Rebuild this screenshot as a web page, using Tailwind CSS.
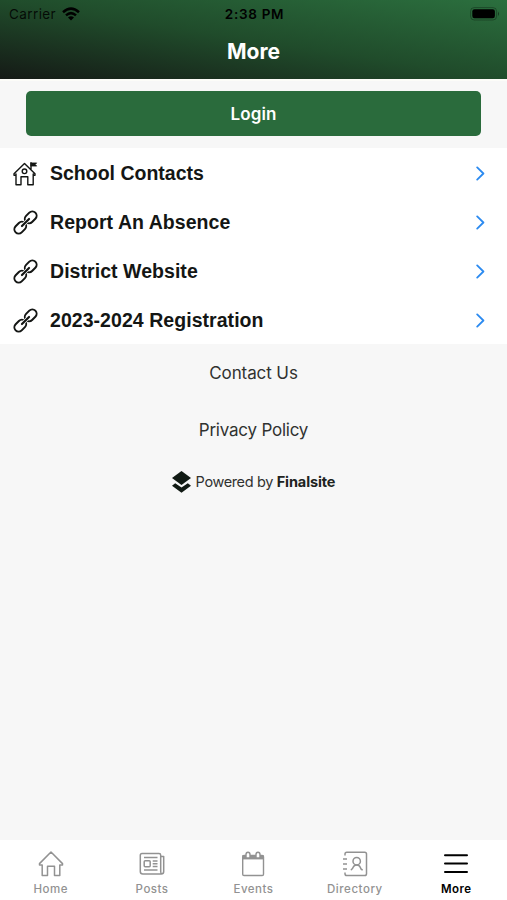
<!DOCTYPE html>
<html lang="en">
<head>
<meta charset="utf-8">
<title>More</title>
<script src="https://cdn.jsdelivr.net/npm/@tailwindcss/browser@4"></script>
</head>
<body class="bg-[#f7f7f7]">
<svg width="0" height="0" class="absolute" aria-hidden="true">
  <symbol id="link" viewBox="0 0 24 24" fill="none" stroke="currentColor" stroke-width="1.9" stroke-linecap="round">
    <rect x="-6.3" y="-4.1" width="12.6" height="8.2" rx="4.1" transform="translate(17 7) rotate(-45)"/>
    <rect x="-6.3" y="-4.1" width="12.6" height="8.2" rx="4.1" transform="translate(7 17) rotate(-45)"/>
    <path d="M8.6 15.4L15.4 8.6" stroke="#fff" stroke-width="3.6"/>
    <path d="M8.6 15.4L15.4 8.6" stroke-width="2.1"/>
  </symbol>
  <symbol id="chevron" viewBox="0 0 9 15" fill="none" stroke="#2b8af0" stroke-width="1.8" stroke-linecap="round" stroke-linejoin="round">
    <path d="M1.2 1.4L7.4 7.5L1.2 13.6"/>
  </symbol>
</svg>
<div class="flex h-[900px] w-[507px] flex-col overflow-hidden font-['Inter',sans-serif]">
  <header class="h-[79px] shrink-0 bg-[linear-gradient(to_top_right,#151a16,#204c2b_50%,#2b6f3e)]">
    <div class="grid h-7 grid-cols-3 items-center pl-[9px] pr-[7px] text-black">
      <div class="flex items-center gap-[6px]">
        <span class="pt-px text-[13.5px] leading-none tracking-[0.4px] text-black/85">Carrier</span>
        <svg class="h-[14px] w-[18px]" viewBox="0 0 18 14" fill="none" stroke="#000" stroke-width="2.5"><path d="M1 5.2Q9-2 17 5.2M4 8.4Q9 3.9 14 8.4"/><path d="M9 13.5L6 10.4Q9 8 12 10.4Z" fill="#000" stroke="none"/></svg>
      </div>
      <span class="pt-px text-center text-[13.5px] font-semibold leading-none tracking-[0.7px] whitespace-nowrap">2:38 PM</span>
      <svg class="h-[14px] w-[30px] justify-self-end" viewBox="0 0 30 14"><rect x="0.6" y="0.6" width="26" height="12.4" rx="3.6" fill="none" stroke="#000" stroke-opacity=".3"/><rect x="2.3" y="2.3" width="22.6" height="9" rx="2.2"/><path d="M28 4.5Q30 6.8 28 9Z" fill-opacity=".45"/></svg>
    </div>
    <h1 class="pt-[12px] text-center text-[21px] font-bold leading-6 text-white">More</h1>
  </header>
  <div class="h-[69px] shrink-0 border-t-2 border-[#fcfcf8] px-[26px] pt-[10px]">
    <button class="block h-[45px] w-full rounded-[5px] bg-[#2a6b3c] pt-[2px] text-[17px] font-semibold tracking-[0.1px] text-white">Login</button>
  </div>
  <ul class="h-[196px] shrink-0 bg-white font-['Liberation_Sans',sans-serif] text-[19.5px] font-bold text-[#141614]">
    <li class="flex h-[49px] items-center gap-[12px] pl-[13px] pr-[22px] pt-[2px]">
      <svg class="h-6 w-[25px]" viewBox="0 0 25 24" fill="none" stroke="currentColor" stroke-width="1.4" stroke-linejoin="round" stroke-linecap="round"><path d="M1 11.8L11.5 1.4L22 11.8M3 12V22.7H8V14.8H14.8V22.7H20.2V12M1 11.8V13.3H3M22 11.8V13.3H20.2M18 7.5V.8"/><path d="M18.1.9H23.7L22.2 2.5L23.7 4.1H18.1Z" fill="currentColor" stroke-width=".7"/><circle cx="11.5" cy="9.3" r="2.3"/></svg>
      <span class="flex-1">School Contacts</span>
      <svg class="h-[15px] w-[9px]"><use href="#chevron"/></svg>
    </li>
    <li class="flex h-[49px] items-center gap-[12px] pl-[13px] pr-[22px] pt-[2px]">
      <svg class="h-[25px] w-[25px]"><use href="#link"/></svg>
      <span class="flex-1 tracking-[0.05px]">Report An Absence</span>
      <svg class="h-[15px] w-[9px]"><use href="#chevron"/></svg>
    </li>
    <li class="flex h-[49px] items-center gap-[12px] pl-[13px] pr-[22px] pt-[2px]">
      <svg class="h-[25px] w-[25px]"><use href="#link"/></svg>
      <span class="flex-1 tracking-[0.05px]">District Website</span>
      <svg class="h-[15px] w-[9px]"><use href="#chevron"/></svg>
    </li>
    <li class="flex h-[49px] items-center gap-[12px] pl-[13px] pr-[22px] pt-[2px]">
      <svg class="h-[25px] w-[25px]"><use href="#link"/></svg>
      <span class="flex-1 tracking-[0.05px]">2023-2024 Registration</span>
      <svg class="h-[15px] w-[9px]"><use href="#chevron"/></svg>
    </li>
  </ul>
  <main class="flex flex-1 flex-col items-center text-[#303230]">
    <a class="flex h-[58px] items-center pt-[2px] text-[17px] tracking-[-0.1px]">Contact Us</a>
    <a class="flex h-[57px] items-center pt-px text-[17px] tracking-[-0.22px]">Privacy Policy</a>
    <div class="flex h-[46px] items-center gap-[5px]">
      <svg class="h-[22px] w-[19px]" viewBox="0 0 19 22" fill="#111a14"><path d="M9.5 0L19 7L9.5 14L0 7Z"/><path d="M0 14.8L3.2 12.2L9.5 16.6L15.8 12.2L19 14.8L9.5 21.8Z"/></svg>
      <span class="text-[14.5px] tracking-[-0.37px] whitespace-nowrap">Powered by <b class="font-bold tracking-[-0.1px] text-[#202320]">Finalsite</b></span>
    </div>
  </main>
  <nav class="grid h-[60px] shrink-0 grid-cols-5 bg-white text-[11.5px] font-medium tracking-[0.5px] text-[#929292]">
    <a class="flex flex-col items-center gap-[4px] pt-[11px]">
      <svg class="h-[26px] w-[26px]" viewBox="0 0 26 26" fill="none" stroke="currentColor" stroke-width="1.5" stroke-linejoin="round"><path d="M4.2 14H1.5V12.6L13 1L24.5 12.6V14H21.8V24.5H16.5V15.2H9.5V24.5H4.2Z"/></svg>
      <span class="leading-4">Home</span>
    </a>
    <a class="flex flex-col items-center gap-[4px] pt-[11px]">
      <svg class="h-[26px] w-[26px]" viewBox="0 0 26 26" fill="none" stroke="currentColor" stroke-width="1.5" stroke-linejoin="round"><path d="M21.7 20.5V4.2Q21.7 2.5 20 2.5H3Q1.3 2.5 1.3 4.2V20.5Q1.3 23 3.8 23H22.2Q24.7 23 24.7 20.5V5.5H21.7M21.7 20.5Q21.7 22.6 22.8 23"/><rect x="5.2" y="9.8" width="6" height="6" rx="1"/><path d="M5 6.5H18.5M13.7 10H18.5M13.7 12.8H18.5M13.7 15.6H18.5M5 19H18.5"/></svg>
      <span class="leading-4">Posts</span>
    </a>
    <a class="flex flex-col items-center gap-[4px] pt-[11px]">
      <svg class="h-[26px] w-[26px]" viewBox="0 0 26 26" fill="none" stroke="currentColor" stroke-width="1.4"><path d="M2.5 4H23.5V8.4H2.5Z" fill="currentColor" stroke="none"/><rect x="2.7" y="4.5" width="20.8" height="20" rx="1.3"/><path d="M6 7V3.6Q6 1.2 8 1.2T10 3.6V7ZM16 7V3.6Q16 1.2 18 1.2T20 3.6V7Z" fill="#fff"/></svg>
      <span class="leading-4">Events</span>
    </a>
    <a class="flex flex-col items-center gap-[4px] pt-[11px]">
      <svg class="h-[26px] w-[26px]" viewBox="0 0 26 26" fill="none" stroke="currentColor" stroke-width="1.5" stroke-linejoin="round"><path d="M3 4.5V3Q3 1.2 4.8 1.2H22.7Q24.5 1.2 24.5 3V22.8Q24.5 24.6 22.7 24.6H4.8Q3 24.6 3 22.8V21.5M1 8H5M1 13H5M1 18H5"/><circle cx="14.7" cy="10.2" r="3.7"/><path d="M8.8 19Q10.8 18.2 11.2 16.2Q12 13.9 14.7 13.9T18.2 16.2Q18.7 18.2 20.7 19"/></svg>
      <span class="leading-4 tracking-[0.55px]">Directory</span>
    </a>
    <a class="flex flex-col items-center gap-[4px] pt-[11px] font-semibold text-black">
      <svg class="h-[26px] w-[26px]" viewBox="0 0 26 26" fill="none" stroke="currentColor" stroke-width="2" stroke-linecap="round"><path d="M2 4.3H24M2 12.6H24M2 20.9H24"/></svg>
      <span class="leading-4">More</span>
    </a>
  </nav>
</div>
</body>
</html>
